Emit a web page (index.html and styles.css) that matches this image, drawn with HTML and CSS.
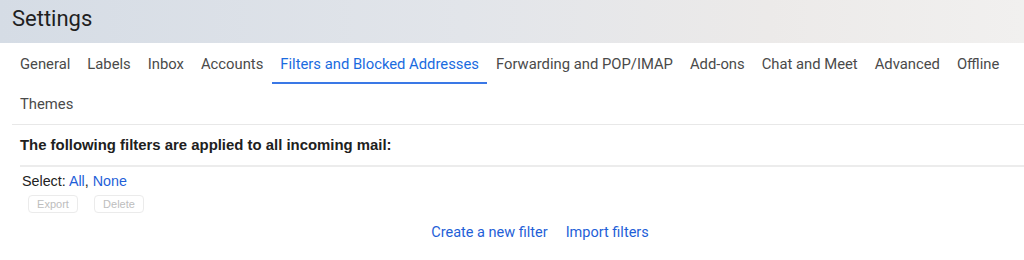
FILE: index.html
```html
<!DOCTYPE html>
<html lang="en">
<head>
  <meta charset="UTF-8">
  <title>Settings</title>
  <link rel="stylesheet" href="styles.css">
</head>
<body>
  <div class="header">
    <h1 class="title">Settings</h1>
  </div>
  <div class="tabs">
    <a class="tab">General</a>
    <a class="tab">Labels</a>
    <a class="tab">Inbox</a>
    <a class="tab">Accounts</a>
    <a class="tab active">Filters and Blocked Addresses</a>
    <a class="tab">Forwarding and POP/IMAP</a>
    <a class="tab">Add-ons</a>
    <a class="tab">Chat and Meet</a>
    <a class="tab">Advanced</a>
    <a class="tab">Offline</a>
    <a class="tab">Themes</a>
  </div>
  <div class="content">
    <h2 class="heading">The following filters are applied to all incoming mail:</h2>
    <div class="select">Select: <a class="link">All</a>, <a class="link">None</a></div>
    <div class="actions">
      <button class="btn" disabled>Export</button>
      <button class="btn" disabled>Delete</button>
    </div>
    <div class="footer-links">
      <a class="link">Create a new filter</a>
      <a class="link">Import filters</a>
    </div>
  </div>
</body>
</html>
```
FILE: styles.css
```css
* {
  margin: 0;
  padding: 0;
  box-sizing: border-box;
}

body {
  font-family: 'Roboto', 'Liberation Sans', sans-serif;
  background-color: #fff;
  color: #202124;
  width: 1024px;
  height: 260px;
  overflow: hidden;
}

.header {
  height: 43px;
  background: linear-gradient(90deg, #d5dce5 0%, #e2e5ea 45%, #eceae9 75%, #f1f0ef 100%);
  padding: 5px 12px 0;
}

.title {
  font-size: 22px;
  font-weight: 400;
  color: #1f1f1f;
  line-height: 28px;
}

.tabs {
  display: flex;
  flex-wrap: wrap;
  width: 1012px;
  margin-left: 12px;
  border-bottom: 1px solid #e8e8e8;
  padding-top: 1px;
}

.tab {
  height: 40px;
  line-height: 40px;
  padding: 0 8px;
  margin-right: 1px;
  font-size: 14.8px;
  color: #4a4a4a;
  white-space: nowrap;
}

.tab.active {
  color: #1a6be0;
  box-shadow: inset 0 -2px #3a78e6;
}

.content {
  padding: 0 0 0 20px;
}

.heading {
  font-family: 'Liberation Sans', Arial, sans-serif;
  font-size: 14.9px;
  font-weight: 700;
  color: #202020;
  line-height: 40px;
  border-bottom: 2px solid #ececec;
}

.select {
  font-family: 'Liberation Sans', Arial, sans-serif;
  font-size: 14.3px;
  line-height: 28px;
  padding-left: 2px;
  color: #222;
}

.link {
  color: #1f5fd8;
}

.actions {
  display: flex;
  gap: 16px;
  padding-left: 8px;
}

.btn {
  width: 50px;
  height: 18px;
  font-family: 'Liberation Sans', Arial, sans-serif;
  font-size: 11px;
  color: #bdbdbd;
  background: #fff;
  border: 1px solid #ebebeb;
  border-radius: 4px;
}

.footer-links {
  display: flex;
  justify-content: center;
  gap: 18px;
  padding-left: 36px;
  margin-top: 11px;
  font-size: 14.5px;
}
```
